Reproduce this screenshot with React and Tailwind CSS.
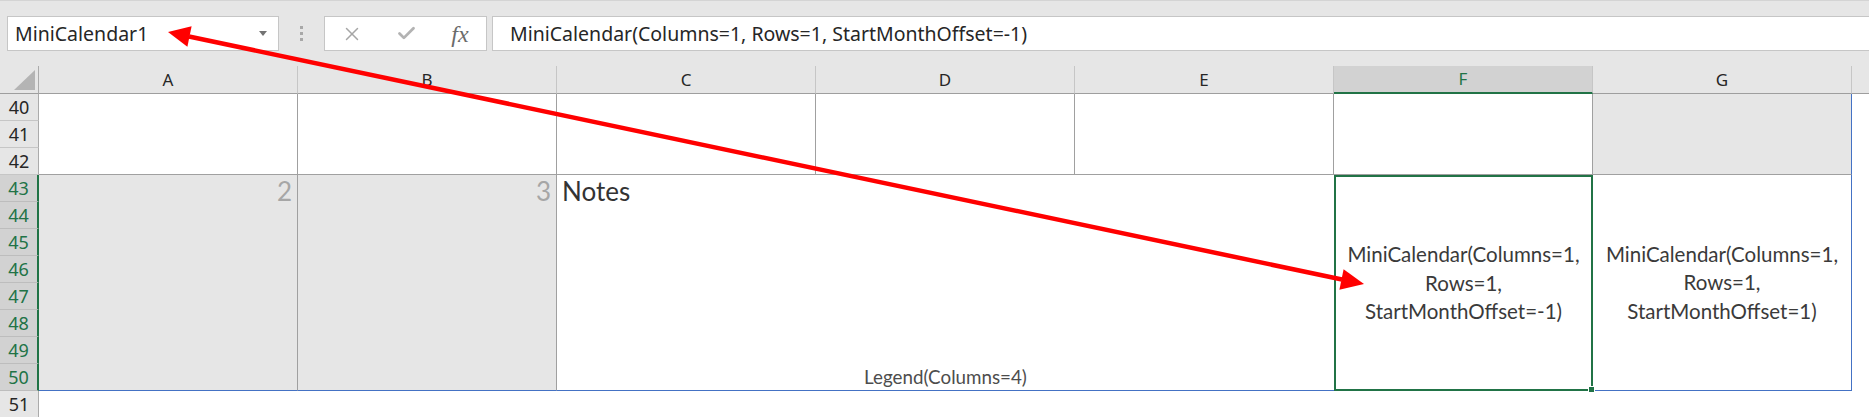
import { X, Check } from "lucide-react";

const ui = "font-['Noto_Sans',sans-serif]";
const cellFont = "font-['Lato',sans-serif]";

const columns = ["A", "B", "C", "D", "E", "F", "G"];

const RowHead = ({ n, active }) => (
  <div
    className={
      active
        ? "h-[27px] flex items-center justify-center bg-[#d2d2d2] text-[#217346] border-b border-[#bdbdbd] border-r-2 border-r-[#217346] text-[18px]"
        : "h-[27px] flex items-center justify-center bg-[#e6e6e6] text-[#262626] border-b border-[#c6c6c6] border-r border-r-[#ababab] text-[18px]"
    }
  >
    {n}
  </div>
);

const Arrow = () => (
  <svg className="absolute left-0 top-0 pointer-events-none" width="1869" height="417" viewBox="0 0 1869 417">
    <line x1="189" y1="36.5" x2="1342" y2="279.5" stroke="#ff0000" strokeWidth="4.5" />
    <polygon points="168,32 187.4,46.8 191.6,26.2" fill="#ff0000" />
    <polygon points="1364,284 1339.4,289.8 1343.6,269.2" fill="#ff0000" />
  </svg>
);

export default function App() {
  return (
    <div className={`relative w-[1869px] h-[417px] overflow-hidden bg-white ${ui}`}>
      {/* toolbar */}
      <div className="h-[66px] bg-[#e6e6e6] border-t border-[#d4d4d4] flex items-start pt-[15px] pl-[7px]">
        <div className="w-[272px] h-[35px] bg-white border border-[#c6c6c6] flex items-center justify-between pl-[7px] pr-[11px]">
          <span className="text-[19.5px] text-[#262626]">MiniCalendar1</span>
          <svg width="8" height="5" viewBox="0 0 8 5">
            <polygon points="0,0 8,0 4,5" fill="#737373" />
          </svg>
        </div>
        <div className="w-[45px] h-[35px] flex flex-col items-center justify-center gap-[3px]">
          <span className="w-[3px] h-[3px] bg-[#a8a8a8]" />
          <span className="w-[3px] h-[3px] bg-[#a8a8a8]" />
          <span className="w-[3px] h-[3px] bg-[#a8a8a8]" />
        </div>
        <div className="w-[163px] h-[35px] bg-white border border-[#c6c6c6] flex items-center pl-[7px] gap-[14px]">
          <div className="w-[40px] flex justify-center">
            <X size={22} strokeWidth={1.6} className="text-[#a6a6a6]" />
          </div>
          <div className="w-[40px] flex justify-center">
            <Check size={21} strokeWidth={3.2} className="text-[#b3b3b3]" />
          </div>
          <div className="w-[40px] flex justify-center">
            <span className="font-['Liberation_Serif',serif] italic text-[24px] text-[#6b6b6b] leading-none">fx</span>
          </div>
        </div>
        <div className="flex-1 ml-[5px] h-[35px] bg-white border border-[#c6c6c6] border-r-0 flex items-center pl-[17px]">
          <span className="text-[19.5px] text-[#262626]">MiniCalendar(Columns=1, Rows=1, StartMonthOffset=-1)</span>
        </div>
      </div>

      {/* column headers */}
      <div className="flex h-[28px] bg-[#e6e6e6]">
        <div className="w-[39px] border-r border-[#ababab] border-b border-b-[#9e9e9e] flex items-end justify-end pr-[3px] pb-[3px]">
          <svg width="21" height="20" viewBox="0 0 21 20">
            <polygon points="21,0 21,20 0,20" fill="#b4b4b4" />
          </svg>
        </div>
        {columns.map((c) =>
          c === "F" ? (
            <div key={c} className="w-[259px] bg-[#d2d2d2] text-[#217346] border-r border-[#c6c6c6] border-b-2 border-b-[#217346] flex items-center justify-center text-[17px]">
              {c}
            </div>
          ) : (
            <div key={c} className="w-[259px] text-[#262626] border-r border-[#c6c6c6] border-b border-b-[#9e9e9e] flex items-center justify-center text-[17px]">
              {c}
            </div>
          )
        )}
        <div className="flex-1 border-b border-[#9e9e9e]" />
      </div>

      {/* rows 40-42 */}
      <div className="flex h-[81px]">
        <div className="w-[39px] flex flex-col">
          <RowHead n={40} />
          <RowHead n={41} />
          <RowHead n={42} />
        </div>
        {columns.slice(0, 6).map((c) => (
          <div key={c} className="w-[259px] bg-white border-r border-b border-[#a0a0a0]" />
        ))}
        <div className="w-[259px] bg-[#e6e6e6] border-b border-[#a0a0a0] border-r border-r-[#4472c4]" />
        <div className="flex-1 bg-white" />
      </div>

      {/* rows 43-50 */}
      <div className={`flex h-[216px] ${cellFont}`}>
        <div className={`w-[39px] flex flex-col ${ui}`}>
          {[43, 44, 45, 46, 47, 48, 49, 50].map((n) => (
            <RowHead key={n} n={n} active />
          ))}
        </div>
        <div className="w-[259px] bg-[#e6e6e6] border-r border-[#a0a0a0] border-b border-b-[#4472c4] flex justify-end pr-[5px] pt-[1px]">
          <span className="text-[26px] leading-[30px] text-[#a6a6a6]">2</span>
        </div>
        <div className="w-[259px] bg-[#e6e6e6] border-r border-[#a0a0a0] border-b border-b-[#4472c4] flex justify-end pr-[5px] pt-[1px]">
          <span className="text-[26px] leading-[30px] text-[#a6a6a6]">3</span>
        </div>
        <div className="w-[777px] bg-white border-b border-[#4472c4] flex flex-col justify-between pl-[5px] pt-[1px] pb-[1px]">
          <span className="text-[26px] leading-[30px] text-[#333333]">Notes</span>
          <span className="self-center text-[18.8px] leading-[24px] text-[#4d4d4d] pr-[5px]">Legend(Columns=4)</span>
        </div>
        <div className="relative w-[259px] bg-white border-2 border-[#217346] flex flex-col items-center justify-center text-[20.5px] leading-[28.5px] text-[#3a3a3a]">
          <span>MiniCalendar(Columns=1,</span>
          <span>Rows=1,</span>
          <span>StartMonthOffset=-1)</span>
          <span className="absolute -right-[4px] -bottom-[4px] w-[7px] h-[7px] bg-[#217346] border border-white" />
        </div>
        <div className="w-[259px] bg-white border-r border-b border-[#4472c4] flex flex-col items-center justify-center text-[20.5px] leading-[28.5px] text-[#3a3a3a]">
          <span>MiniCalendar(Columns=1,</span>
          <span>Rows=1,</span>
          <span>StartMonthOffset=1)</span>
        </div>
        <div className="flex-1 bg-white" />
      </div>

      {/* row 51 */}
      <div className="flex h-[27px]">
        <div className="w-[39px]">
          <RowHead n={51} />
        </div>
        <div className="flex-1 bg-white" />
      </div>

      <Arrow />
    </div>
  );
}
